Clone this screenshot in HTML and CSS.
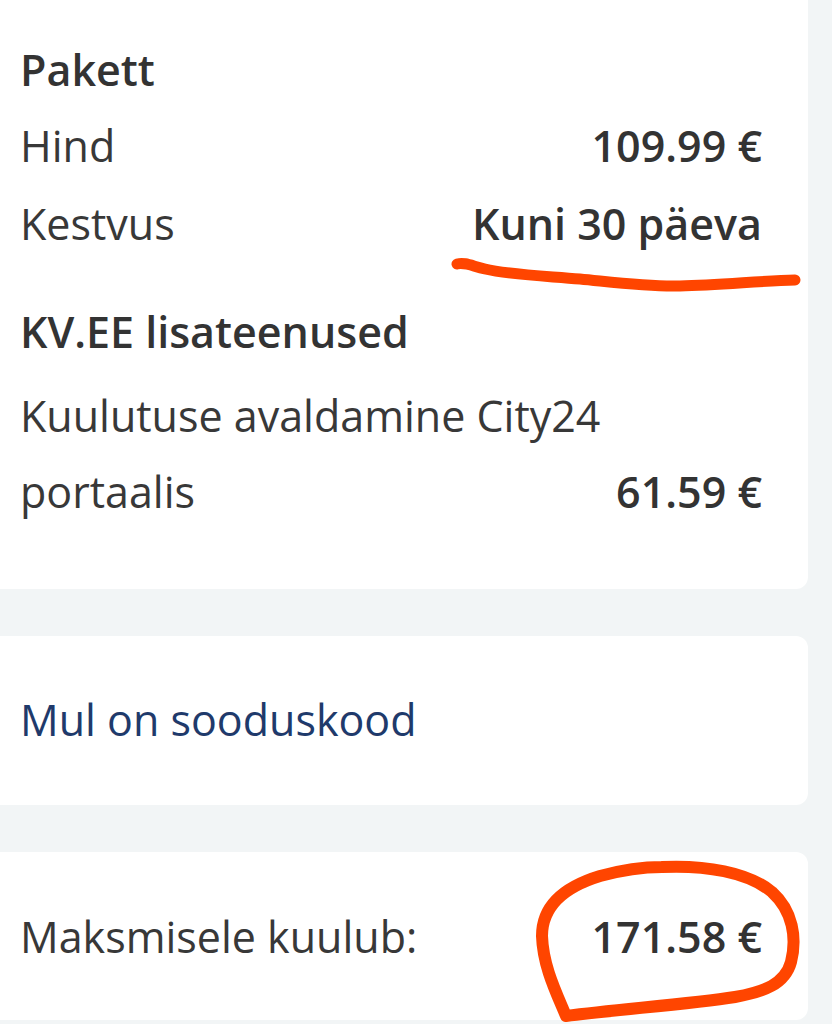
FILE: index.html
```html
<!DOCTYPE html>
<html lang="et">
<head>
<meta charset="utf-8">
<title>Pakett</title>
<link rel="stylesheet" href="styles.css">
</head>
<body>
<div class="page">
  <section class="card card-first">
    <h2 class="title">Pakett</h2>
    <div class="row row-first"><span class="label">Hind</span><span class="value">109.99 €</span></div>
    <div class="row"><span class="label">Kestvus</span><span class="value">Kuni 30 päeva</span></div>
    <h2 class="title title-gap">KV.EE lisateenused</h2>
    <div class="row row-service"><span class="label label-wrap">Kuulutuse avaldamine City24 portaalis</span><span class="value">61.59 €</span></div>
  </section>
  <section class="card card-code">
    <a class="link">Mul on sooduskood</a>
  </section>
  <section class="card card-total">
    <div class="row row-total"><span class="label">Maksmisele kuulub:</span><span class="value">171.58 €</span></div>
  </section>
  <svg class="marks" width="832" height="1024" viewBox="0 0 832 1024" aria-hidden="true">
    <path d="M457,264 C465,262 472,266 485,269 C510,275 545,276 580,279 C620,283 650,287 680,286 C720,285 760,281 795,280" fill="none" stroke="#ff4500" stroke-width="11" stroke-linecap="round" stroke-linejoin="round"/>
    <path d="M662,867 C705,865 748,872 772,892 C793,911 797,938 791,962 C785,984 764,992 735,997 C690,1004 622,1009 566,1016 C556,992 543,966 542,936 C542,906 564,887 600,876 C622,870 642,867 662,867" fill="none" stroke="#ff4500" stroke-width="12" stroke-linecap="round" stroke-linejoin="round"/>
  </svg>
</div>
</body>
</html>
```

FILE: styles.css
```css
html, body {
  margin: 0;
  padding: 0;
}

body {
  background: #f2f5f6;
  font-family: "Open Sans", "Noto Sans", sans-serif;
  color: #383838;
  font-size: 43px;
  line-height: 76px;
}

.page {
  position: relative;
  width: 832px;
  height: 1024px;
  overflow: hidden;
}

.card {
  background: #ffffff;
  margin-right: 24px;
  border-radius: 0 12px 12px 0;
  padding: 0 46px 0 20px;
}

.card-first {
  border-radius: 0 0 12px 0;
  padding-top: 32px;
  padding-bottom: 59px;
}

.card-code {
  margin-top: 47px;
  padding-top: 46px;
  padding-bottom: 47px;
}

.card-total {
  margin-top: 47px;
  padding-top: 47px;
  padding-bottom: 45px;
}

.title {
  margin: 0;
  font-size: 43px;
  font-weight: 600;
  line-height: 76px;
  color: #333333;
}

.title-gap {
  margin-top: 32px;
}

.row {
  display: flex;
  justify-content: space-between;
  align-items: flex-end;
  margin-top: 2px;
}

.row-first {
  margin-top: 0;
}

.row-service {
  margin-top: 8px;
}

.row-total {
  margin-top: 0;
}

.label {
  font-weight: 400;
}

.label-wrap {
  max-width: 600px;
}

.value {
  font-weight: 600;
  white-space: nowrap;
  color: #333333;
}

.link {
  display: block;
  color: #1f3a6b;
  font-weight: 400;
}

.marks {
  position: absolute;
  left: 0;
  top: 0;
  pointer-events: none;
}
```
